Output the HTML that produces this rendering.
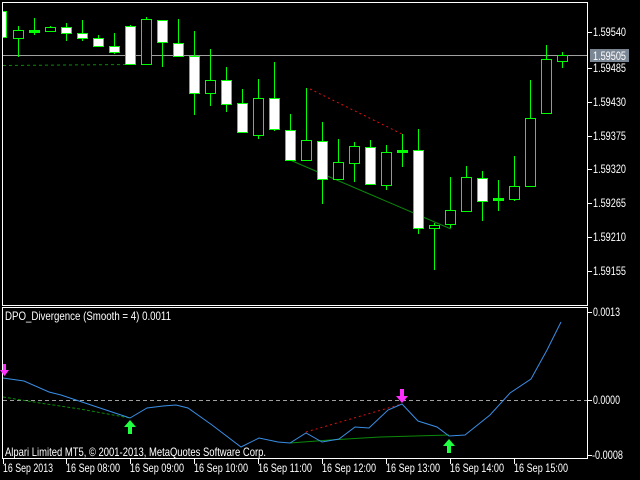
<!DOCTYPE html>
<html><head><meta charset="utf-8"><style>
html,body{margin:0;padding:0;background:#000;width:640px;height:480px;overflow:hidden}
svg{display:block}
text{font-family:"Liberation Sans",sans-serif;font-size:12px;fill:#fff}
</style></head><body>
<svg width="640" height="480" viewBox="0 0 640 480" xmlns="http://www.w3.org/2000/svg">
<defs><clipPath id="m"><rect x="3" y="3" width="584" height="302"/></clipPath>
<clipPath id="p"><rect x="3" y="308" width="584" height="151"/></clipPath></defs>
<rect width="640" height="480" fill="#000"/>
<rect x="2.5" y="2.5" width="585" height="303" fill="none" stroke="#fff"/>
<g clip-path="url(#m)">
<line x1="3" y1="55.5" x2="587" y2="55.5" stroke="#a0a0a0"/>
<line x1="3" y1="65.5" x2="130" y2="64.5" stroke="#0a8a0a" stroke-dasharray="3,3"/>
<line x1="290" y1="160" x2="451" y2="229" stroke="#0a8a0a"/>
<line x1="310" y1="89" x2="402" y2="134" stroke="#e01010" stroke-dasharray="2,3"/>
<g stroke="#00ff00" stroke-width="1">
<rect x="-2.5" y="11.5" width="9" height="26" fill="#fff"/>
<path d="M18.5 26V57M34.5 18V35M50.5 26V31M66.5 23V41M82.5 20V41M98.5 35V47M114.5 33V54M130.5 25V65M146.5 17V64M162.5 20V67M178.5 19V56M194.5 31V115M210.5 49V106M226.5 67V112M242.5 89V132M258.5 79V139M274.5 62V131M290.5 114V161M306.5 88V161M322.5 122V204M338.5 139V180M354.5 142V182M370.5 140V185M386.5 145V190M402.5 134V167M418.5 129V234M434.5 223V270M450.5 177V228M466.5 166V211M482.5 171V221M498.5 180V211M514.5 156V201M530.5 80V187M546.5 45V113M562.5 52V68"/>
<g fill="#000">
<rect x="13.5" y="30.5" width="10" height="8"/>
<rect x="45.5" y="27.5" width="10" height="4"/>
<rect x="141.5" y="19.5" width="10" height="45"/>
<rect x="205.5" y="80.5" width="10" height="13"/>
<rect x="253.5" y="98.5" width="10" height="37"/>
<rect x="301.5" y="140.5" width="10" height="20"/>
<rect x="333.5" y="162.5" width="10" height="17"/>
<rect x="349.5" y="146.5" width="10" height="17"/>
<rect x="381.5" y="152.5" width="10" height="33"/>
<rect x="429.5" y="225.5" width="10" height="3"/>
<rect x="445.5" y="210.5" width="10" height="14"/>
<rect x="461.5" y="177.5" width="10" height="34"/>
<rect x="509.5" y="186.5" width="10" height="13"/>
<rect x="525.5" y="118.5" width="10" height="68"/>
<rect x="541.5" y="59.5" width="10" height="54"/>
<rect x="557.5" y="55.5" width="10" height="6"/>
</g>
<g fill="#fff">
<rect x="61.5" y="27.5" width="10" height="6"/>
<rect x="77.5" y="33.5" width="10" height="5"/>
<rect x="93.5" y="38.5" width="10" height="8"/>
<rect x="109.5" y="46.5" width="10" height="6"/>
<rect x="125.5" y="26.5" width="10" height="38"/>
<rect x="157.5" y="20.5" width="10" height="22"/>
<rect x="173.5" y="43.5" width="10" height="13"/>
<rect x="189.5" y="56.5" width="10" height="37"/>
<rect x="221.5" y="80.5" width="10" height="24"/>
<rect x="237.5" y="103.5" width="10" height="29"/>
<rect x="269.5" y="98.5" width="10" height="31"/>
<rect x="285.5" y="130.5" width="10" height="30"/>
<rect x="317.5" y="141.5" width="10" height="38"/>
<rect x="365.5" y="147.5" width="10" height="37"/>
<rect x="413.5" y="150.5" width="10" height="78"/>
<rect x="477.5" y="178.5" width="10" height="23"/>
</g>
<g fill="#00ff00" stroke="none">
<rect x="29" y="30" width="11" height="3"/>
<rect x="397" y="150" width="11" height="3"/>
<rect x="493" y="198" width="11" height="3"/>
</g>
</g>
</g>
<g stroke="#fff"><path d="M588 32.5h4M588 68.5h4M588 102.5h4M588 136.5h4M588 169.5h4M588 203.5h4M588 237.5h4M588 271.5h4"/></g>
<g>
<text x="593" y="36" textLength="33" lengthAdjust="spacingAndGlyphs">1.59540</text>
<text x="593" y="72" textLength="33" lengthAdjust="spacingAndGlyphs">1.59485</text>
<text x="593" y="106" textLength="33" lengthAdjust="spacingAndGlyphs">1.59430</text>
<text x="593" y="140" textLength="33" lengthAdjust="spacingAndGlyphs">1.59375</text>
<text x="593" y="173" textLength="33" lengthAdjust="spacingAndGlyphs">1.59320</text>
<text x="593" y="207" textLength="33" lengthAdjust="spacingAndGlyphs">1.59265</text>
<text x="593" y="241" textLength="33" lengthAdjust="spacingAndGlyphs">1.59210</text>
<text x="593" y="275" textLength="33" lengthAdjust="spacingAndGlyphs">1.59155</text>
</g>
<rect x="590" y="49" width="39" height="13" fill="#7b8694"/>
<text x="593" y="60" textLength="33" lengthAdjust="spacingAndGlyphs">1.59505</text>
<rect x="2.5" y="307.5" width="585" height="151" fill="none" stroke="#fff"/>
<g clip-path="url(#p)">
<line x1="3" y1="400.5" x2="587" y2="400.5" stroke="#a0a0a0" stroke-dasharray="4,3"/>
<polyline points="3,397 40,403 80,409 130,418" fill="none" stroke="#0a8a0a" stroke-dasharray="3,2"/>
<polyline points="290,443 330,440 380,437 449,435" fill="none" stroke="#0a8a0a"/>
<line x1="306" y1="432" x2="402" y2="404" stroke="#e01010" stroke-dasharray="2,3"/>
<polyline fill="none" stroke="#3a8ee6" points="3,378 24,381 49,392 61,395 82,402 106,410 130,418 147,408 163,406 176,405 188,408 212,425 241,447 259,438 278,442 290,443 306,433 322,442 339,439 355,427 369,428 388,410 402,404 418,421 437,427 449,436 465,435 490,415 510,393 531,379 547,350 561,322"/>
</g>
<g fill="#ff30ff"><path d="M3 364h3v6h3l-4.5 6l-4.5-6h3z"/><path d="M400 389h4v7h4l-6 7l-6-7h4z"/></g>
<g fill="#20ff40"><path d="M130 420l6 7h-4v7h-4v-7h-4z"/><path d="M449 439l6 7h-4v7h-4v-7h-4z"/></g>
<text x="5" y="320" textLength="166" lengthAdjust="spacingAndGlyphs">DPO_Divergence (Smooth = 4)  0.0011</text>
<text x="5" y="456" textLength="261" lengthAdjust="spacingAndGlyphs">Alpari Limited MT5, © 2001-2013, MetaQuotes Software Corp.</text>
<g stroke="#fff"><path d="M588 312.5h4M588 400.5h4M588 455.5h4"/></g>
<text x="593" y="316" textLength="27" lengthAdjust="spacingAndGlyphs">0.0013</text>
<text x="593" y="404" textLength="27" lengthAdjust="spacingAndGlyphs">0.0000</text>
<text x="592" y="459" textLength="31" lengthAdjust="spacingAndGlyphs">-0.0008</text>
<g stroke="#fff"><path d="M3.5 459v5M66.5 459v5M130.5 459v5M194.5 459v5M258.5 459v5M322.5 459v5M386.5 459v5M450.5 459v5M514.5 459v5"/></g>
<g>
<text x="3" y="472" textLength="50" lengthAdjust="spacingAndGlyphs">16 Sep 2013</text>
<text x="66" y="472" textLength="54" lengthAdjust="spacingAndGlyphs">16 Sep 08:00</text>
<text x="130" y="472" textLength="54" lengthAdjust="spacingAndGlyphs">16 Sep 09:00</text>
<text x="194" y="472" textLength="54" lengthAdjust="spacingAndGlyphs">16 Sep 10:00</text>
<text x="258" y="472" textLength="54" lengthAdjust="spacingAndGlyphs">16 Sep 11:00</text>
<text x="322" y="472" textLength="54" lengthAdjust="spacingAndGlyphs">16 Sep 12:00</text>
<text x="386" y="472" textLength="54" lengthAdjust="spacingAndGlyphs">16 Sep 13:00</text>
<text x="450" y="472" textLength="54" lengthAdjust="spacingAndGlyphs">16 Sep 14:00</text>
<text x="514" y="472" textLength="54" lengthAdjust="spacingAndGlyphs">16 Sep 15:00</text>
</g>
</svg>
</body></html>
